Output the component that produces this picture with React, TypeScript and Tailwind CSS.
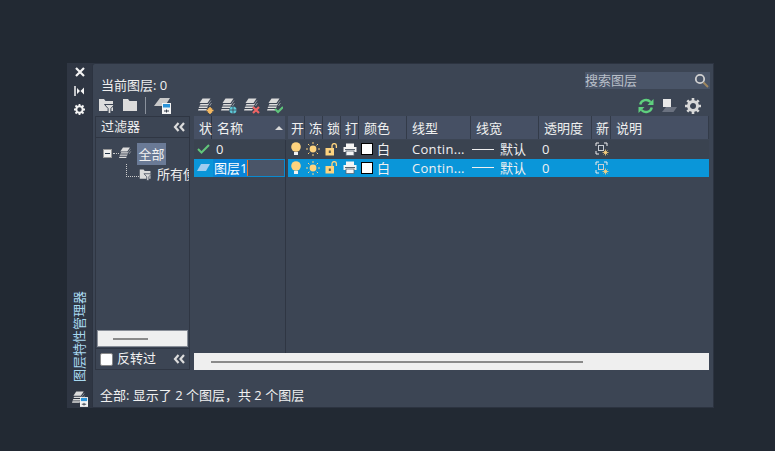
import { FC, ReactNode } from 'react';

const font = { fontFamily: '"Open Sans", "Noto Sans CJK SC", sans-serif' };

// Column widths of the scrolling part of the layer table
const columns = [
    { label: '开', width: 'w-[17px] pl-[3px]' },
    { label: '冻', width: 'w-[18px] pl-[4px]' },
    { label: '锁', width: 'w-[18px] pl-[4px]' },
    { label: '打', width: 'w-[18px] pl-[4px]' },
    { label: '颜色', width: 'w-[48px] pl-[5px]' },
    { label: '线型', width: 'w-[64px] pl-[5px]' },
    { label: '线宽', width: 'w-[68px] pl-[5px]' },
    { label: '透明度', width: 'w-[53px] pl-[5px]' },
    { label: '新', width: 'w-[19px] pl-[4px]' },
    { label: '说明', width: 'flex-1 pl-[5px]' }
];

const Stack: FC<{ className?: string; children?: ReactNode }> = ({ className, children }) => (
    <svg viewBox="0 0 16 16" className={className ?? 'w-4 h-4'}>
        <path d="M4.500 0.500h8L9.500 5h-8z" fill="#dcdcdc" />
        <path d="M2.500 6h8.500l-1 1.500H1.500zM1.500 8.500h8.500l-1 1.500H.5zM.5 11h8.500l-1 1.500H0z" fill="#dcdcdc" />
        <path d="M13 2.500l-2.500 3.500M13.500 5l-2 3" stroke="#8d939c" strokeWidth="1" />
        {children}
    </svg>
);

const Bulb = () => (
    <svg viewBox="0 0 12 14" className="h-[14px] w-3">
        <circle cx="6" cy="5" r="4.800" fill="#fdd37e" />
        <rect x="4" y="10" width="4" height="3" fill="#f2f2f2" />
    </svg>
);

const Sun = () => (
    <svg viewBox="0 0 14 14" className="h-[14px] w-[14px]">
        <circle cx="7" cy="7" r="3.400" fill="#fdd37e" />
        <path d="M7 0v2M7 12v2M0 7h2M12 7h2M2 2l1.400 1.400M10.600 10.600L12 12M2 12l1.400-1.400M10.600 3.400L12 2" stroke="#fdd37e" strokeWidth="1" />
    </svg>
);

const Lock = () => (
    <svg viewBox="0 0 13 13" className="h-[13px] w-[13px]">
        <rect x="0.500" y="5" width="8.500" height="7.500" fill="#fdd37e" />
        <rect x="3.800" y="7.500" width="2" height="2.500" fill="#5d5a4c" />
        <path d="M7 5V2.800a2.200 2.200 0 0 1 4.400 0V5" fill="none" stroke="#fdd37e" strokeWidth="1.300" />
    </svg>
);

const Printer = () => (
    <svg viewBox="0 0 14 13" className="h-[13px] w-[14px]">
        <rect x="3" y="0.500" width="8" height="3.500" fill="#f4f4f4" />
        <rect x="0.500" y="4" width="13" height="5" fill="#f4f4f4" />
        <rect x="3" y="8" width="8" height="4.500" fill="#f4f4f4" stroke="#59636f" strokeWidth="0.800" />
        <rect x="2" y="6" width="10" height="1" fill="#59636f" />
    </svg>
);

const NewVp = () => (
    <svg viewBox="0 0 14 14" className="h-[14px] w-[14px]">
        <path d="M1 4V1h3M9 1h3v3M1 9v3h3" fill="none" stroke="#eeeeee" strokeWidth="1" />
        <rect x="3.500" y="3.500" width="5" height="5" fill="none" stroke="#c9ced4" strokeWidth="1" />
        <path d="M10.500 7.500v6M7.500 10.500h6M8.500 8.500l4 4M12.500 8.500l-4 4" stroke="#fdd37e" strokeWidth="0.800" />
        <circle cx="10.500" cy="10.500" r="1" fill="#fdd37e" />
    </svg>
);

const FolderIcon: FC<{ funnel?: boolean; className?: string }> = ({ funnel, className }) => (
    <svg viewBox="0 0 17 17" className={className ?? 'h-[17px] w-[17px]'}>
        <path d="M1 2h5l1.500 2H15v10H1z" fill="#dcdcdc" />
        {funnel && <path d="M6.500 7.500h10l-3.600 4v5h-2.800v-5z" fill="#dcdcdc" stroke="#3c4554" strokeWidth="1" />}
    </svg>
);

// Small white card with a blue bar, used by the layer state icons
const StateCard: FC<{ className?: string }> = ({ className }) => (
    <svg viewBox="0 0 9 11" className={className}>
        <rect width="9" height="11" fill="#f4f4f4" />
        <rect x="1" y="1" width="7" height="3.500" fill="#2b93d8" />
        <path d="M2 8h5M4.500 6.500v3" stroke="#333b49" strokeWidth="1" />
    </svg>
);

const Chevrons = () => (
    <svg viewBox="0 0 13 10" className="h-[10px] w-[13px]">
        <path d="M5.500 1L2 5l3.500 4M11 1L7.500 5l3.500 4" fill="none" stroke="#dcdcdc" strokeWidth="2.200" />
    </svg>
);

const Row: FC<{ selected?: boolean; name: string }> = ({ selected, name }) => {
    const cells = selected ? 'bg-[#0a96d9]' : 'bg-[#3a4350]';
    return (
        <div className="flex h-[18.5px] text-[13px] leading-[18px] text-[#f0f0f0]">
            <div className={`flex w-[91px] shrink-0 items-center ${cells}`}>
                <div className="flex w-[18px] shrink-0 justify-center">
                    {selected ? (
                        <svg viewBox="0 0 13 7" className="h-[7px] w-[13px]">
                            <path d="M4 0h9L9 7H0z" fill="#9fcdf0" />
                        </svg>
                    ) : (
                        <svg viewBox="0 0 13 10" className="h-[10px] w-[13px]">
                            <path d="M1 5l3.500 3.500L12 1" fill="none" stroke="#62c67a" strokeWidth="2" />
                        </svg>
                    )}
                </div>
                {selected ? (
                    <div className="ml-[1px] flex h-[18px] flex-1 items-center border border-[#0a8ad0] bg-[#4a5568]">
                        <span className="bg-[#0a84d8] text-white">{name}</span>
                        <span className="h-[16px] w-px bg-[#f0782a]" />
                    </div>
                ) : (
                    <span className="ml-[4px]">{name}</span>
                )}
            </div>
            <div className="w-[3px] shrink-0 bg-[#3a4350]" />
            <div className={`flex flex-1 items-center ${cells}`}>
                <div className="flex w-[16px] justify-center"><Bulb /></div>
                <div className="flex w-[18px] justify-center"><Sun /></div>
                <div className="flex w-[18px] justify-center"><Lock /></div>
                <div className="flex w-[19px] justify-center"><Printer /></div>
                <div className="flex w-[48px] items-center pl-[2px]">
                    <span className="h-[12px] w-[12px] border border-black bg-white" />
                    <span className="ml-[4px]">白</span>
                </div>
                <div className="w-[64px] pl-[5px] tracking-[0.3px]">Contin...</div>
                <div className="flex w-[68px] items-center">
                    <span className="ml-[1px] h-px w-[22px] bg-[#f0f0f0]" />
                    <span className="ml-[6px]">默认</span>
                </div>
                <div className="w-[53px] pl-[3px]">0</div>
                <div className="flex w-[19px] justify-center"><NewVp /></div>
            </div>
        </div>
    );
};

export default function App() {
    return (
        <div className="h-[451px] w-[775px] overflow-hidden bg-[#222933] pl-[67px] pt-[63px]" style={font}>
            <div className="flex h-[345px] w-[647px] bg-[#2f3643]">
                {/* Title strip */}
                <div className="flex w-[25px] shrink-0 flex-col items-center pt-[3px] text-white">
                    <svg viewBox="0 0 10 10" className="mt-px h-[10px] w-[10px]">
                        <path d="M1 1l8 8M9 1l-8 8" stroke="#f4f4f4" strokeWidth="2.200" />
                    </svg>
                    <svg viewBox="0 0 11 10" className="mt-[9px] h-[10px] w-[11px]">
                        <path d="M1 0v10" stroke="#f4f4f4" strokeWidth="1.500" />
                        <path d="M3 2v6l3-3zM10 1.500v7L6.500 5z" fill="#f4f4f4" />
                    </svg>
                    <svg viewBox="0 0 11 11" className="mt-[8px] h-[11px] w-[11px]">
                        <circle cx="5.500" cy="5.500" r="3.200" fill="none" stroke="#f4f4f4" strokeWidth="2" />
                        <path d="M5.500 0v2M5.500 9v2M0 5.500h2M9 5.500h2M1.500 1.500l1.500 1.500M8 8l1.500 1.500M9.500 1.500L8 3M3 8L1.500 9.500" stroke="#f4f4f4" strokeWidth="1.800" />
                    </svg>
                    <div className="flex-1" />
                    <div className="mr-[2px] rotate-180 text-[13px] leading-[14px] text-[#a8d8f0] [text-orientation:sideways] [writing-mode:vertical-rl]">
                        图层特性管理器
                    </div>
                    <div className="relative mb-[1px] mt-[9px] h-[16px] w-[16px]">
                        <Stack className="h-[15px] w-[15px]" />
                        <StateCard className="absolute bottom-0 right-0 h-[10px] w-[8px]" />
                    </div>
                </div>

                {/* Main panel */}
                <div className="flex min-w-0 flex-1 flex-col rounded-tl-[3px] border border-[#2c3340] bg-[#3c4554] pl-[2px] pr-[4px]">
                    <div className="flex h-[31px] shrink-0 items-start justify-between pl-[6px] text-[13px] text-[#f0f0f0]">
                        <span className="mt-[11px] leading-[20px]">当前图层: 0</span>
                        <div className="mr-[-1px] mt-[8px] flex h-[17px] w-[125px] items-center justify-between bg-[#4a5568] pr-[1px] text-[13px] text-[#b9bfc8]">
                            <span>搜索图层</span>
                            <svg viewBox="0 0 15 15" className="h-[15px] w-[15px]">
                                <circle cx="6" cy="6" r="4.200" fill="none" stroke="#d0d0d0" strokeWidth="1.800" />
                                <path d="M9.500 9.500L14 14" stroke="#a08860" strokeWidth="2" />
                            </svg>
                        </div>
                    </div>

                    {/* Toolbar */}
                    <div className="flex h-[21px] shrink-0 items-center pl-[3px]">
                        <FolderIcon funnel />
                        <FolderIcon className="ml-[7px] h-[17px] w-[17px]" />
                        <div className="ml-[6px] h-[17px] w-px bg-[#8a919c]" />
                        <div className="relative ml-[8px] h-[17px] w-[17px]">
                            <svg viewBox="0 0 17 17" className="h-[17px] w-[17px]">
                                <path d="M6 1h10l-5 8H0z" fill="#c9c9c9" />
                            </svg>
                            <StateCard className="absolute bottom-0 right-0 h-[11px] w-[9px]" />
                        </div>
                        <Stack className="ml-[27px] h-[16px] w-[16px]">
                            <path d="M12 9v7M8.500 12.500h7M10 10.500l4 4M14 10.500l-4 4" stroke="#f4b860" strokeWidth="1.600" />
                        </Stack>
                        <Stack className="ml-[7px] h-[16px] w-[16px]">
                            <circle cx="12" cy="12" r="3.500" fill="#5cc8d8" />
                            <path d="M12 8v8M8 12h8" stroke="#3c4554" strokeWidth="0.800" />
                        </Stack>
                        <Stack className="ml-[7px] h-[16px] w-[16px]">
                            <path d="M9 9l6 6M15 9l-6 6" stroke="#ef6464" strokeWidth="2.200" />
                        </Stack>
                        <Stack className="ml-[7px] h-[16px] w-[16px]">
                            <path d="M8 11l3 3 5-5" fill="none" stroke="#5ec47a" strokeWidth="2" />
                        </Stack>
                        <div className="flex-1" />
                        <svg viewBox="0 0 16 16" className="h-[16px] w-[16px]">
                            <path d="M2.200 6.500A6 6 0 0 1 12.500 4" fill="none" stroke="#5fd07e" strokeWidth="2.400" />
                            <path d="M15.500 1v6h-6z" fill="#5fd07e" />
                            <path d="M13.800 9.500A6 6 0 0 1 3.500 12" fill="none" stroke="#5fd07e" strokeWidth="2.400" />
                            <path d="M.5 15V9h6z" fill="#5fd07e" />
                        </svg>
                        <svg viewBox="0 0 16 16" className="ml-[8px] h-[16px] w-[16px]">
                            <path d="M4 9h11l-3.500 5H0z" fill="#6b7280" />
                            <rect x="1" y="1" width="8" height="8" fill="#e8e8e8" />
                        </svg>
                        <svg viewBox="0 0 16 16" className="ml-[7px] mr-[8px] h-[16px] w-[16px]">
                            <circle cx="8" cy="8" r="4.500" fill="none" stroke="#d8d8d8" strokeWidth="3" />
                            <path d="M8 0v3M8 13v3M0 8h3M13 8h3M2.300 2.300l2.100 2.100M11.600 11.600l2.100 2.100M13.700 2.300l-2.100 2.100M4.400 11.600l-2.100 2.100" stroke="#d8d8d8" strokeWidth="2.600" />
                        </svg>
                    </div>

                    <div className="flex h-[254px] shrink-0">
                        {/* Filter tree */}
                        <div className="flex w-[95px] shrink-0 flex-col border border-[#2f3643] text-[13px] text-[#f0f0f0]">
                            <div className="flex h-[21px] shrink-0 items-center justify-between border-b border-[#2f3643] pl-[5px] pr-[3px]">
                                <span>过滤器</span>
                                <Chevrons />
                            </div>
                            <div className="flex-1 pl-[7px] pt-[5px]">
                                <div className="flex h-[21px] items-center">
                                    <span className="flex h-[9px] w-[9px] items-center justify-center border border-[#999] bg-[#eee]">
                                        <span className="h-px w-[5px] bg-[#234]" />
                                    </span>
                                    <span className="ml-[1px] w-[6px] border-t border-dotted border-[#ccc]" />
                                    <Stack className="h-[14px] w-[14px]" />
                                    <span className="ml-[4px] h-[22px] bg-[#6a7a96] px-[1.500px] leading-[22px]">全部</span>
                                </div>
                                <div className="flex h-[21px] items-center overflow-hidden whitespace-nowrap pl-[23px]">
                                    <span className="mb-[9px] h-[14px] w-[13px] shrink-0 border-b border-l border-dotted border-[#ccc]" />
                                    <FolderIcon funnel className="h-[13px] w-[13px] shrink-0" />
                                    <span className="ml-[5px]">所有使用的图层</span>
                                </div>
                            </div>
                            <div className="mx-[1px] flex h-[17px] shrink-0 items-center border border-[#8a8f98] bg-[#efefef] pl-[15px]">
                                <div className="h-[2px] w-[35px] bg-[#8a8a8a]" />
                            </div>
                            <div className="mt-[1px] flex h-[21px] shrink-0 items-center border-t border-[#2f3643] pl-[4px] pr-[3px]">
                                <span className="h-[13px] w-[13px] rounded-[2px] border border-[#888] bg-white" />
                                <span className="ml-[4px]">反转过</span>
                                <span className="ml-auto flex"><Chevrons /></span>
                            </div>
                        </div>

                        {/* Layer table */}
                        <div className="ml-[4px] flex min-w-0 flex-1 flex-col">
                            <div className="flex h-[23px] shrink-0 text-[13px] leading-[24px] text-[#f0f0f0]">
                                <div className="w-[18px] shrink-0 border-r border-[#2f3643] bg-[#465064] pl-[5px]">状</div>
                                <div className="flex w-[73px] shrink-0 items-center justify-between bg-[#465064] pl-[5px] pr-[2px]">
                                    <span>名称</span>
                                    <span className="h-0 w-0 border-x-[4px] border-b-[4px] border-x-transparent border-b-[#d8d8d8]" />
                                </div>
                                <div className="w-[3px] shrink-0" />
                                <div className="flex flex-1 bg-[#465064]">
                                    {columns.map((c) => (
                                        <div key={c.label} className={`${c.width} overflow-hidden whitespace-nowrap border-r border-[#333b49]`}>
                                            {c.label}
                                        </div>
                                    ))}
                                </div>
                            </div>
                            <div className="relative mt-px flex-1">
                                <Row name="0" />
                                <Row name="图层1" selected />
                                <div className="absolute bottom-[17px] left-[91px] top-0 w-px bg-[#2f3643]" />
                                <div className="absolute bottom-0 left-0 right-0 flex h-[17px] items-center bg-[#efefef] pl-[17px]">
                                    <div className="h-[2px] w-[372px] bg-[#8a8a8a]" />
                                </div>
                            </div>
                        </div>
                    </div>

                    <div className="mt-[15px] pl-[5px] text-[13px] leading-[20px] text-[#f0f0f0]">
                        全部: 显示了 2 个图层，共 2 个图层
                    </div>
                </div>
            </div>
        </div>
    );
}
